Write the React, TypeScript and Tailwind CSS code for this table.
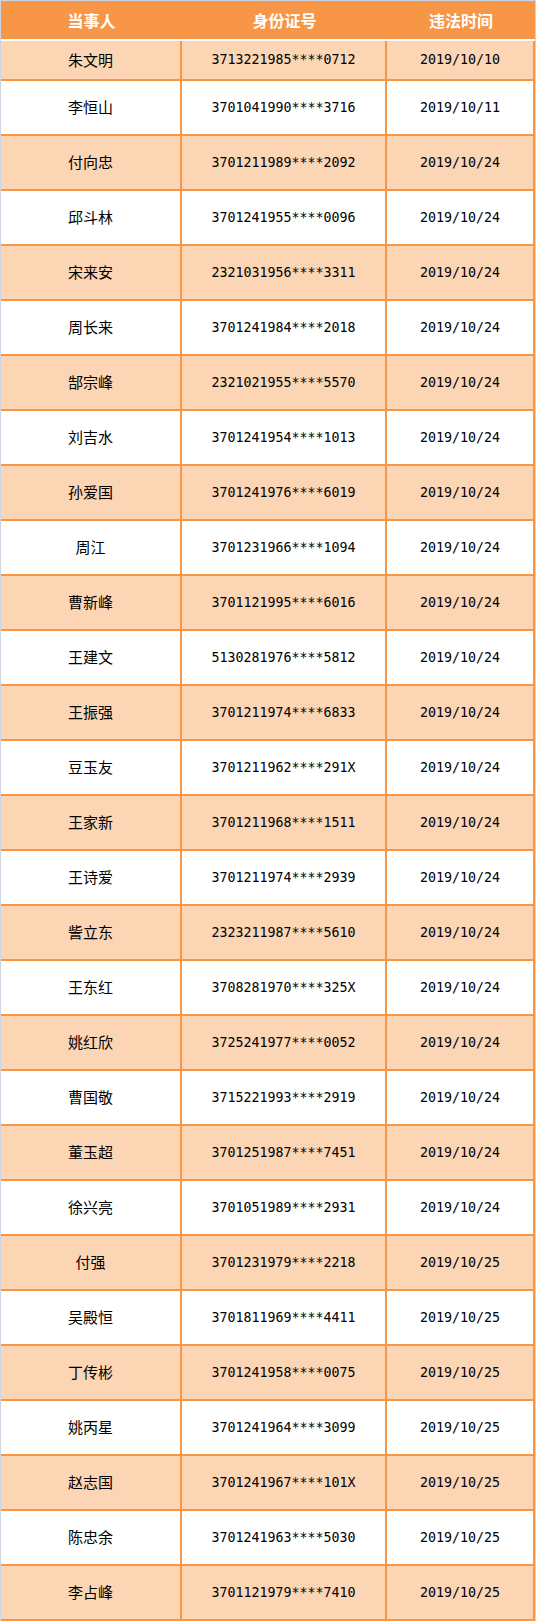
const rows: [string, string, string][] = [
  ["朱文明", "3713221985****0712", "2019/10/10"],
  ["李恒山", "3701041990****3716", "2019/10/11"],
  ["付向忠", "3701211989****2092", "2019/10/24"],
  ["邱斗林", "3701241955****0096", "2019/10/24"],
  ["宋来安", "2321031956****3311", "2019/10/24"],
  ["周长来", "3701241984****2018", "2019/10/24"],
  ["郜宗峰", "2321021955****5570", "2019/10/24"],
  ["刘吉水", "3701241954****1013", "2019/10/24"],
  ["孙爱国", "3701241976****6019", "2019/10/24"],
  ["周江", "3701231966****1094", "2019/10/24"],
  ["曹新峰", "3701121995****6016", "2019/10/24"],
  ["王建文", "5130281976****5812", "2019/10/24"],
  ["王振强", "3701211974****6833", "2019/10/24"],
  ["豆玉友", "3701211962****291X", "2019/10/24"],
  ["王家新", "3701211968****1511", "2019/10/24"],
  ["王诗爱", "3701211974****2939", "2019/10/24"],
  ["訾立东", "2323211987****5610", "2019/10/24"],
  ["王东红", "3708281970****325X", "2019/10/24"],
  ["姚红欣", "3725241977****0052", "2019/10/24"],
  ["曹国敬", "3715221993****2919", "2019/10/24"],
  ["董玉超", "3701251987****7451", "2019/10/24"],
  ["徐兴亮", "3701051989****2931", "2019/10/24"],
  ["付强", "3701231979****2218", "2019/10/25"],
  ["吴殿恒", "3701811969****4411", "2019/10/25"],
  ["丁传彬", "3701241958****0075", "2019/10/25"],
  ["姚丙星", "3701241964****3099", "2019/10/25"],
  ["赵志国", "3701241967****101X", "2019/10/25"],
  ["陈忠余", "3701241963****5030", "2019/10/25"],
  ["李占峰", "3701121979****7410", "2019/10/25"],
];

const cjk = "font-['Noto_Sans_CJK_SC',sans-serif]";
const mono = "font-['DejaVu_Sans_Mono',monospace]";

export default function App() {
  return (
    <div className="w-[536px] bg-[#cdd4e2] pt-px pl-px pr-px">
      <div className="flex h-[40px] border-b-2 border-white bg-[#f79646] text-[16px] font-bold text-white">
        <div className={`flex w-[181px] items-center justify-center ${cjk}`}>当事人</div>
        <div className={`flex w-[205px] items-center justify-center ${cjk}`}>身份证号</div>
        <div className={`flex flex-1 items-center justify-center ${cjk}`}>违法时间</div>
      </div>
      {rows.map(([name, id, date], i) => (
        <div
          key={i}
          className={`flex border-b-2 border-[#f79646] text-black ${i === 0 ? "h-[40px]" : "h-[55px]"} ${
            i % 2 === 0 ? "bg-[#fcd5b4]" : "bg-white"
          }`}
        >
          <div className={`flex w-[181px] items-center justify-center border-r-2 border-[#f79646] text-[15px] ${cjk}`}>
            {name}
          </div>
          <div className={`flex w-[205px] items-center justify-center border-r-2 border-[#f79646] text-[13.3px] ${mono}`}>
            {id}
          </div>
          <div className={`flex flex-1 items-center justify-center border-r-2 border-[#f79646] text-[13.3px] ${mono}`}>
            {date}
          </div>
        </div>
      ))}
    </div>
  );
}
